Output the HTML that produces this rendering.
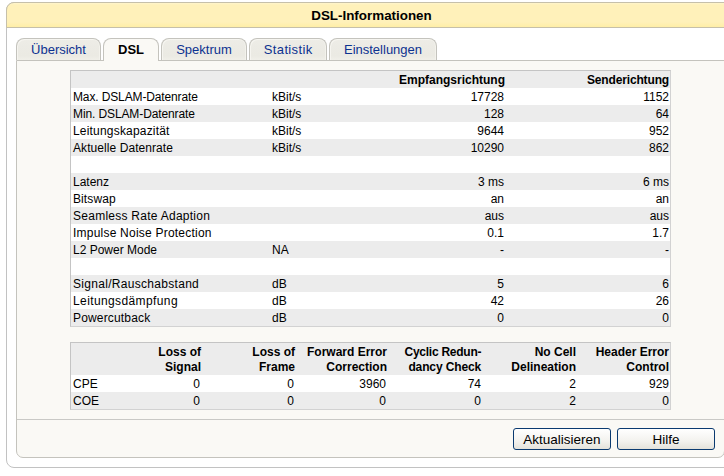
<!DOCTYPE html>
<html><head><meta charset="utf-8">
<style>
*{margin:0;padding:0;box-sizing:border-box}
html,body{width:724px;height:476px;overflow:hidden;background:#fff;font-family:"Liberation Sans",sans-serif;color:#000}
.abs{position:absolute}
#outer{left:6px;top:2px;width:731px;height:466px;border:1px solid #c2c2c2;border-radius:8px;background:#fff}
#hdr{left:-1px;top:-1px;width:731px;height:26px;background:linear-gradient(#fff5cc 0,#fff1ba 2px,#fff1ba 19px,#ffeea6 24px);border:1px solid #c6c0aa;border-radius:8px 8px 0 0;text-align:center;font-weight:bold;font-size:13.4px;line-height:25px}
.tab{top:38px;height:22px;border:1px solid #c4c3bd;border-bottom:none;border-radius:8px 8px 0 0;background:linear-gradient(#eeede7 0,#ecebe5 30%,#ebeae3 80%,#f0efe9 100%);box-shadow:inset 1px 1px 0 #f6f5f0,inset -1px 0 0 #f3f2ec;color:#0c3290;font-size:13px;text-align:center;line-height:22px}
.tab.act{height:23px;background:#faf9f5;box-shadow:none;color:#000;font-weight:bold;z-index:3}
#panel{left:16px;top:60px;width:709px;height:398px;border:1px solid #c4c3bd;border-radius:0 0 7px 7px;background:#faf9f5}
#sep{left:17px;top:419px;width:707px;height:1px;background:#c9c9c6}
.tbl{left:70px;width:601px;border-top:1px solid #c4c4c4;border-left:1px solid #c4c4c4;border-right:1px solid #d2d2d2;border-bottom:1px solid #d2d2d2;background:#fff;font-size:12px}
.row{position:relative;height:17px;line-height:19px;white-space:nowrap}
.g{background:#ececec}
.c{position:absolute;top:0}
.r{text-align:right}
.b{font-weight:bold}
.btn{top:428px;width:98px;height:22px;border:1px solid #0a3a70;border-radius:3px;background:linear-gradient(#ffffff,#f3f2ee 60%,#e4e2da);font-size:13.5px;text-align:center;line-height:21px}
</style></head><body>
<div id="outer" class="abs"><div id="hdr" class="abs">DSL-Informationen</div></div>

<div id="panel" class="abs"></div>
<div id="sep" class="abs"></div>

<div class="tab abs" style="left:16px;width:85px">Übersicht</div>
<div class="tab abs act" style="left:103px;width:56px">DSL</div>
<div class="tab abs" style="left:161px;width:86px">Spektrum</div>
<div class="tab abs" style="left:249px;width:78px;letter-spacing:0.35px;padding-left:0.35px">Statistik</div>
<div class="tab abs" style="left:329px;width:108px">Einstellungen</div>

<div class="tbl abs" style="top:70px;height:257px">
 <div class="row g"><div class="c r b" style="right:165px">Empfangsrichtung</div><div class="c r b" style="right:1px;letter-spacing:-0.15px">Senderichtung</div></div>
 <div class="row"><div class="c" style="left:2px;letter-spacing:-0.13px">Max. DSLAM-Datenrate</div><div class="c" style="left:201px">kBit/s</div><div class="c r" style="right:166px">17728</div><div class="c r" style="right:1px">1152</div></div>
 <div class="row g"><div class="c" style="left:2px;letter-spacing:-0.11px">Min. DSLAM-Datenrate</div><div class="c" style="left:201px">kBit/s</div><div class="c r" style="right:166px">128</div><div class="c r" style="right:1px">64</div></div>
 <div class="row"><div class="c" style="left:2px;letter-spacing:0.19px">Leitungskapazität</div><div class="c" style="left:201px">kBit/s</div><div class="c r" style="right:166px">9644</div><div class="c r" style="right:1px">952</div></div>
 <div class="row g"><div class="c" style="left:2px;letter-spacing:0.07px">Aktuelle Datenrate</div><div class="c" style="left:201px">kBit/s</div><div class="c r" style="right:166px">10290</div><div class="c r" style="right:1px">862</div></div>
 <div class="row"></div>
 <div class="row g"><div class="c" style="left:2px">Latenz</div><div class="c r" style="right:166px">3 ms</div><div class="c r" style="right:1px">6 ms</div></div>
 <div class="row"><div class="c" style="left:2px;letter-spacing:0.1px">Bitswap</div><div class="c r" style="right:166px">an</div><div class="c r" style="right:1px">an</div></div>
 <div class="row g"><div class="c" style="left:2px;letter-spacing:0.26px">Seamless Rate Adaption</div><div class="c r" style="right:166px">aus</div><div class="c r" style="right:1px">aus</div></div>
 <div class="row"><div class="c" style="left:2px;letter-spacing:0.22px">Impulse Noise Protection</div><div class="c r" style="right:166px">0.1</div><div class="c r" style="right:1px">1.7</div></div>
 <div class="row g"><div class="c" style="left:2px">L2 Power Mode</div><div class="c" style="left:201px">NA</div><div class="c r" style="right:166px">-</div><div class="c r" style="right:1px">-</div></div>
 <div class="row"></div>
 <div class="row g"><div class="c" style="left:2px;letter-spacing:0.3px">Signal/Rauschabstand</div><div class="c" style="left:201px">dB</div><div class="c r" style="right:166px">5</div><div class="c r" style="right:1px">6</div></div>
 <div class="row"><div class="c" style="left:2px;letter-spacing:0.39px">Leitungsdämpfung</div><div class="c" style="left:201px">dB</div><div class="c r" style="right:166px">42</div><div class="c r" style="right:1px">26</div></div>
 <div class="row g"><div class="c" style="left:2px;letter-spacing:0.16px">Powercutback</div><div class="c" style="left:201px">dB</div><div class="c r" style="right:166px">0</div><div class="c r" style="right:1px">0</div></div>
</div>

<div class="tbl abs" style="top:342px;height:68px">
 <div class="row g b" style="height:32px;line-height:15px">
  <div class="c r" style="right:469px;top:2px">Loss of<br>Signal</div>
  <div class="c r" style="right:375px;top:2px">Loss of<br>Frame</div>
  <div class="c r" style="right:283px;top:2px">Forward Error<br>Correction</div>
  <div class="c r" style="right:189px;top:2px"><span style="letter-spacing:-0.25px;margin-right:-0.25px">Cyclic Redun-</span><br><span style="letter-spacing:-0.12px;margin-right:-0.12px">dancy Check</span></div>
  <div class="c r" style="right:94px;top:2px">No Cell<br>Delineation</div>
  <div class="c r" style="right:1px;top:2px">Header Error<br>Control</div>
 </div>
 <div class="row"><div class="c" style="left:2px">CPE</div><div class="c r" style="right:470px">0</div><div class="c r" style="right:376px">0</div><div class="c r" style="right:284px">3960</div><div class="c r" style="right:189px">74</div><div class="c r" style="right:94px">2</div><div class="c r" style="right:1px">929</div></div>
 <div class="row g"><div class="c" style="left:2px">COE</div><div class="c r" style="right:470px">0</div><div class="c r" style="right:376px">0</div><div class="c r" style="right:284px">0</div><div class="c r" style="right:189px">0</div><div class="c r" style="right:94px">2</div><div class="c r" style="right:1px">0</div></div>
</div>

<div class="btn abs" style="left:513px">Aktualisieren</div>
<div class="btn abs" style="left:617px">Hilfe</div>
</body></html>
